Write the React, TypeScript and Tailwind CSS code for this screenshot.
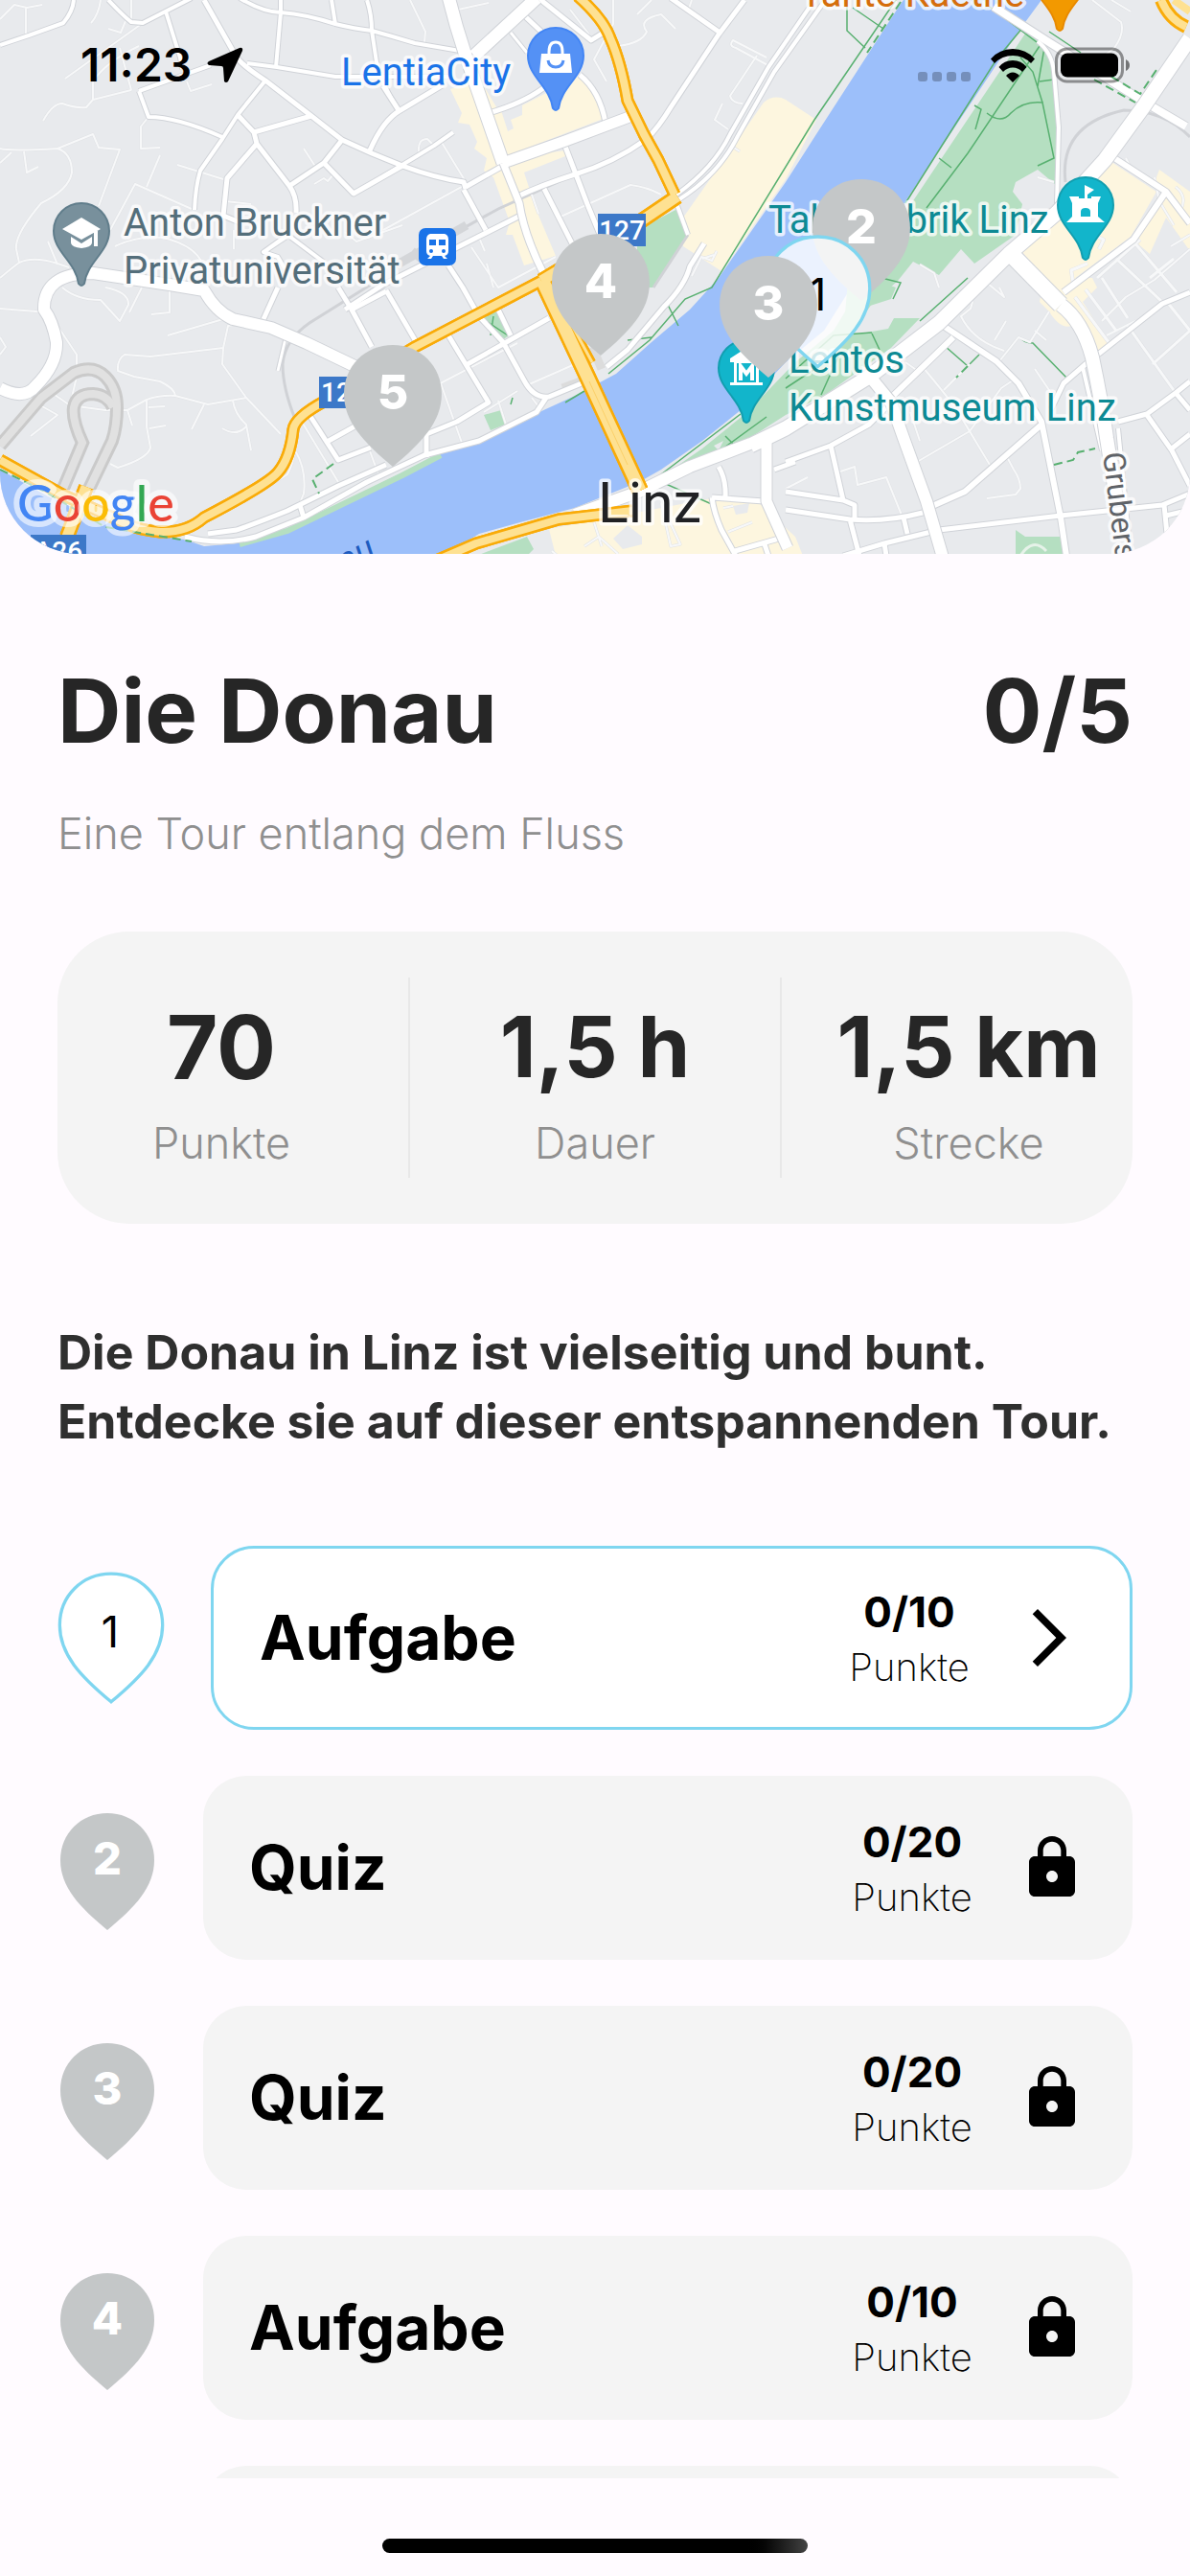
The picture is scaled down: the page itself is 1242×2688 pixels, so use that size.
import { MdLock } from "react-icons/md";

type Road = [number, string];

const LAND = "#e8eaed";
const PARK = "#b5dfc1";
const TRAIL = "#58b070";
const SHOP = "#fdf6df";

const PIN_PATH =
  "M49 0C76.500 0 98 21 98 49C98 77 78 98 49 122C20 98 0 77 0 49C0 21 21.500 0 49 0Z";

const lanes: Road[] = [
  [2, "M0 20L15 5L28 8L44 5M27 8V36M105 0Q103 15 95 24M113 30L126 34L131 22M137 0V20M68 82L149 24"],
  [2, "M45 126Q55 108 65 108Q78 113 90 112L97 104L137 94M97 104V85Q110 65 145 48M125 50L137 94"],
  [2, "M0 155Q10 158 60 155Q75 160 75 180Q72 198 43 212Q15 245 17 260L20 274M25 158L28 180L40 174M0 170L12 159"],
  [2, "M60 155L97 140L103 154L125 156L103 215M155 122L147 132V155L167 154M167 162L153 195"],
  [2, "M115 240L141 192L200 218M185 172L233 187M195 85L199 95L221 88M317 155L330 175M328 192L338 186L342 189L348 182"],
  [2, "M0 290Q12 280 20 274Q35 267 60 275L72 279M50 252L60 276M120 257Q145 245 170 248Q200 255 210 272M244 240V260M420 235L372 252L360 242M235 210L262 213"],
  [2, "M60 340L80 370V393L73 423M47 405L73 423L110 428H133L153 417Q168 412 183 413L217 422L257 415L293 453"],
  [2, "M257 415L232 380L233 363L238 340L250 338M233 363L157 372L130 370Q122 375 123 387L140 393L167 398Q182 405 183 413"],
  [2, "M213 422L200 448M243 418Q245 432 257 443L262 470M232 447Q247 456 257 445M153 417V445L157 467Q155 478 123 488L115 484"],
  [2, "M32 455L60 433L44 424M133 428L138 444M155 425L172 424M156 447L173 444M175 350L233 333M148 300L135 326M177 300V326L158 328"],
  [2, "M0 322L50 326M65 300Q80 313 105 313L125 335L134 318Q135 305 110 300M0 352L6 362L0 370"],
  [2, "M428 0L444 33L443 44M478 10L510 3M400 240L545 160M583 227L658 193Q675 195 690 203M460 147L485 188M437 158Q436 145 446 145L453 152"],
  [2, "M595 10L615 36M640 0V25L620 62L633 85M645 48Q670 45 675 33Q665 20 690 15L705 30M680 0L665 15M800 60L765 42Q760 48 768 50L805 70M790 58L762 100Q764 108 775 108M754 108L746 125L760 135M763 152L772 158M722 0L718 12"],
  [2, "M555 203L562 223M500 248L506 262M492 258L520 300L580 268M508 275L515 300M733 270L745 266M748 262L743 272L732 268L722 288"],
  [2, "M460 400L482 462M520 418L528 443M555 415L565 428M450 405L540 358M550 402L600 380M505 430L540 408"],
  [2, "M315 440L353 503M308 470Q320 490 317 515L313 525L316 535M385 468L395 495M268 515L300 495Q308 480 307 465"],
  [2, "M1140 0L1170 23Q1174 35 1163 50L1150 60M1160 0L1180 12M1083 185L1100 190M960 276L975 285L980 300"],
  [2, "M1000 305L1015 315L1013 322L1003 330Q1015 355 1048 366M1038 355L1050 335M1030 295L1048 310L1043 300M1043 377L1063 352L1075 357L1095 325M1080 345L1092 355"],
  [2, "M1080 385L1097 410M963 383Q990 415 1000 430L1033 485M957 482L1012 450L1045 405L1060 395M985 407L1012 380M945 378L962 390M950 430L960 460"],
  [2, "M1050 475L1058 490Q1065 500 1065 510L1060 516L1030 520M877 492L892 487L895 506L925 498L942 540M820 510L843 498"],
  [3, "M1100 215L1060 250M1177 340L1227 410M1203 380L1242 345M1218 315L1242 345M1122 310L1157 357M1133 302L1165 345M1150 290L1177 332M1165 270L1213 315M1183 252L1228 305M1200 290L1225 270M1145 290L1190 250M1135 275L1118 282L1120 295M1147 260L1152 250L1140 245"],
  [2, "M1150 335L1175 310L1205 292L1242 260M1155 350L1185 335M1155 165L1180 175L1175 165M1205 185L1210 210L1225 235M1222 257L1242 245M1227 195Q1240 205 1232 220"],
  [2, "M690 525L700 570L710 568L690 525M700 500L725 490M610 570L625 560L645 578M620 545L628 570M576 575L582 580M755 530L765 528M760 555L785 545"],
];

const streets: Road[] = [
  [4, "M0 47L30 37L66 24Q76 12 77 0M113 0Q130 18 137 23L149 24L200 -2M173 12L188 60L190 72M145 95L220 68"],
  [5, "M213 0L247 60Q255 70 277 84L325 121L357 146L388 160L420 173Q455 186 484 190L486 197"],
  [4, "M250 -2Q275 13 293 13Q320 15 350 25Q370 30 388 32Q410 38 433 45L480 53M293 0V13L288 70M346 0L350 25M383 0Q388 15 388 32L393 65Q398 88 416 115"],
  [4, "M258 66L289 70L350 80H470M145 95L155 122Q185 122 232 143M277 84L248 120L232 145L209 178Q204 195 203 219"],
  [5, "M248 120L265 138L268 150L237 186L233 225L250 232M265 138Q300 128 325 121M268 150L302 194Q310 205 309 222"],
  [5, "M302 194L338 170L357 146M338 170L369 202L420 173M386 157Q400 125 418 115L463 88M400 90L416 115"],
  [4, "M400 184L453 152L473 138M275 263L300 245L340 275M302 245L275 263L290 268L297 280"],
  [5, "M562 -2L617 42L633 32M549 18L565 33M510 118Q545 108 567 92M605 78Q626 95 632 128"],
  [3, "M533 34L550 55"],
  [5, "M484 198L507 240M486 195L525 173M568 197L600 260M590 153L613 213L627 247M543 225L400 297L360 323M468 277L483 300L497 325"],
  [5, "M777 0L750 36L700 112Q688 132 675 145Q640 170 600 182Q565 193 538 206M700 -2L750 33"],
  [4, "M850 0L802 70L762 140Q745 175 706 203"],
  [4, "M860 2L808 75L770 142Q750 182 709 208"],
  [4, "M707 215L718 245"],
  [5, "M735 254L720 278Q715 298 693 320L655 365L633 383"],
  [5, "M353 300L367 323L388 362M367 323L403 304M275 333L290 300M403 303L435 358"],
  [3, "M298 353L290 387"],
  [5, "M323 433L353 480L387 467M343 460L370 445M445 477V453L477 440L510 420L468 350M500 330L525 357L547 397Q557 416 573 414L607 400M488 380L573 332M520 323L533 350"],
  [5, "M217 557L247 553Q270 545 300 533L353 507L403 485M193 560Q230 570 267 560L317 540L383 503L443 475L500 460L560 430L570 415M313 527L317 540"],
  [4, "M1083 43Q1098 55 1100 75L1105 133L1103 213"],
  [8, "M1037 7L1093 43L1197 108L1238 132"],
  [6, "M1160 163L1217 200L1242 233M1217 200L1183 250L1110 305"],
  [6, "M980 337L1040 377L1063 400L1087 440L1107 540L1113 580M995 352L963 383L932 413M973 528L1007 513L1087 443"],
  [5, "M820 482L867 465L907 443L925 425M867 465L880 522M820 513L880 522L892 527V540M820 532L887 542Q925 545 963 535M887 542L897 580M943 540L947 557"],
  [5, "M880 580L923 567L980 553L1107 538L1213 527L1242 515M923 567L925 580M1097 427L1110 400L1133 380L1213 317L1242 305"],
  [5, "M1167 440L1197 432L1227 410L1242 398M1197 433L1223 470L1242 507M1223 468L1242 453M1227 410L1242 428M1215 527L1218 557M1217 538L1242 532"],
  [4, "M1167 447L1180 580M1130 383L1150 470"],
  [5, "M750 487Q758 500 757 519M743 519L797 523M743 519Q745 535 753 553L768 580M767 575L820 560M797 565L802 580M808 490L830 482"],
];

const avenues: Road[] = [
  [12, "M0 405Q25 418 37 403Q60 380 59 357Q55 335 46 323Q45 285 97 285L177 297L213 303Q225 325 243 333L283 342L320 358L370 382"],
  [13, "M468 -4Q475 25 485 55L525 170M495 58L560 -2"],
  [11, "M525 170L590 147L662 120"],
  [7, "M525 170L542 212Q547 245 567 285"],
  [15, "M1242 40L1193 112L1153 167L1103 222L1053 265L980 337L907 393L820 447L783 465"],
  [12, "M783 463L720 487L667 513L600 537"],
  [17, "M1053 263L1107 318"],
  [14, "M1107 318Q1130 335 1140 373Q1150 420 1155 457L1165 520"],
  [12, "M908 393L930 420L943 457L967 523L985 585"],
  [11, "M800 460V523L822 572"],
];

const highways: Road[] = [
  [13, "M603 -4Q630 20 637 40Q648 65 655 105L672 140L687 167L704 203"],
  [16, "M707 205L667 232L565 293"],
  [13, "M565 293L433 362L340 418Q308 435 306 448Q303 478 290 493Q280 505 213 540Q195 556 167 555Q145 553 133 547L67 517L0 480"],
  [18, "M566 293L613 393L668 512"],
  [8, "M572 293L618 378"],
  [13, "M455 585L497 567L583 542L660 533"],
  [16, "M90 508L70 560"],
];

const trails =
  "M945 212L1040 62L1068 28M967 217L1010 160L1085 48M980 165L993 175M1017 110L1024 114L1018 135M1030 118Q1045 130 1055 118Q1068 105 1088 107L1078 75L1065 60M1085 85L1100 83M1083 90L1090 50L1030 5M1088 107L1100 165L1083 173M884 0V32L903 50M890 8L922 30M1095 33L1128 55M935 0L850 125L743 300L715 312L678 355L635 390M1010 290L960 335M820 395L870 350L910 347M820 405L858 380M857 412L875 372M910 348L918 365M920 290L940 295L932 312M773 432L690 495M800 435L745 475M757 455L765 463M986 361L1010 382L1022 370M1065 352Q1068 358 1078 358L1113 394M697 318L708 340M655 355L680 352M503 332L530 350M515 330L512 350M535 415L533 422M695 505L745 527M590 420L610 408";

const dashedTrails =
  "M940 2L905 55M1142 83L1185 107M1160 80L1190 98L1207 73M1010 382L998 394M1100 485L1120 480L1125 472L1143 468M0 490L45 512L110 550L200 565M348 484L326 500L333 515";

const transit =
  "M387 297L323 337Q297 355 295 380Q295 405 308 437M413 277L520 218L600 182M1112 190Q1105 130 1173 115Q1215 115 1242 143M718 245L682 300";

function Roads({ items, casing, fill, edge }: { items: Road[]; casing: string; fill: string; edge: number }) {
  return (
    <g fill="none" strokeLinejoin="round">
      {items.map(([w, d], i) => (
        <path key={"c" + i} d={d} stroke={casing} strokeWidth={w + edge} />
      ))}
      {items.map(([w, d], i) => (
        <path key={"f" + i} d={d} stroke={fill} strokeWidth={w} />
      ))}
    </g>
  );
}

function Poi({ x, y, fill, edge, children }: { x: number; y: number; fill: string; edge: string; children?: React.ReactNode }) {
  return (
    <g transform={`translate(${x} ${y})`}>
      <path
        d="M-3 85C-6 62 -29 52 -29 30A29 29 0 0 1 29 30C29 52 6 62 3 85Q0 89 -3 85Z"
        fill={fill}
        stroke={edge}
        strokeWidth="2"
      />
      {children}
    </g>
  );
}

function Stop({ x, y, n }: { x: number; y: number; n: number }) {
  return (
    <g transform={`translate(${x} ${y})`}>
      <path d={PIN_PATH} transform="scale(1.04)" fill="#c4c7c8" />
      <text x="51" y="67" textAnchor="middle" fontSize="50" fontWeight="800" fill="#fff" className="font-['Inter',sans-serif]">
        {n}
      </text>
    </g>
  );
}

function CityMap() {
  const halo = { stroke: "#fff", strokeOpacity: 0.75, strokeWidth: 7, strokeLinejoin: "round" as const, paintOrder: "stroke" };
  return (
    <svg
      viewBox="0 0 1242 578"
      preserveAspectRatio="xMidYMid slice"
      className="block h-[578px] w-full font-['Roboto',sans-serif]"
      role="img"
      aria-label="Karte von Linz"
    >
      <rect width="1242" height="578" fill={LAND} />

      <g fill={SHOP}>
        <path d="M545 110L603 80Q622 88 632 123L528 163L510 120L522 112L530 137L536 134L533 125L545 120Z" />
        <path d="M470 93L492 85L530 165L590 157V163L547 180L560 220L580 267L547 277L535 245H528L532 232L515 185L505 178L508 165L495 155L498 148L490 130L478 128L482 118Z" />
        <path d="M505 90L520 115L510 118Z" />
        <path d="M797 107Q808 98 820 104L852 125L820 187L753 283L713 257V227Z" />
        <path d="M1157 167L1207 200L1180 247L1113 297L1107 312L1067 263L1103 225Z" />
        <path d="M1210 177L1242 200V262L1217 227L1200 265L1185 252L1217 200L1205 190Z" />
        <path d="M1090 290H1140L1145 300L1130 315L1157 357L1143 370L1127 335Q1110 350 1095 325L1085 315Z" />
        <path d="M573 552L690 530L743 520L790 523L830 560L838 580H580Z" />
      </g>
      <path d="M640 562L655 548L670 560V568L650 573ZM765 528L782 525L780 535L768 537Z" fill={LAND} />

      <path
        d="M0 490L50 518L100 540L143 557L193 563L213 570L247 567L300 553L400 503L460 473L500 463L563 430L600 413L643 390L680 357L720 323L750 290L820 190L852 140L938 7L943 0H1087L1065 30L943 213L860 345L820 378L773 428L733 460L690 490L667 503L600 530L543 545L500 557L463 580H0Z"
        fill="#9cbffa"
      />
      <path d="M250 568L300 554L420 496L460 475" stroke={PARK} strokeWidth="6" fill="none" />

      <g fill={PARK}>
        <path d="M1072 32L1090 50L1098 73L1103 133L1102 193L1083 177L1060 190L1057 200L1067 213L1060 245L1017 275L1003 260L980 287L953 273L937 293L910 317L887 350L927 343L933 332H960L930 363L857 415L820 433L767 467L687 500L733 468L780 430L830 378L870 345L948 217Z" />
        <path d="M707 218L718 245L683 300L665 300V240Z" />
        <path d="M503 332L517 323L532 350L520 357ZM505 433L523 428L527 443L512 449Z" />
        <path d="M1060 553L1070 560H1107L1110 580H1060ZM497 580L550 560L557 573L550 580Z" />
        <path d="M885 293L915 293L935 300L930 312L905 320L880 350Z" />
      </g>
      <path d="M825 430L875 405L840 425ZM745 465L755 460L750 470Z" fill={LAND} />
      <path d="M1065 580Q1078 560 1092 575" fill="none" stroke="#e6f2e9" strokeWidth="3" />

      <path d={trails} fill="none" stroke={TRAIL} strokeWidth="1.500" />
      <path d={transit} fill="none" stroke="#d0d2d6" strokeWidth="3" />
      <path d="M413 277L487 235M430 262L440 270" fill="none" stroke="#d4d6d9" strokeWidth="9" />

      <Roads items={lanes} casing="#e0e2e5" fill="#f7f8f9" edge={1} />

      <g fill="none">
        <g stroke="#cacaca" strokeWidth="14">
          <path d="M0 465L43 415L77 389Q97 380 110 393Q122 405 122 425Q122 445 117 460L92 512" />
          <path d="M65 512L86 462Q75 438 77 425Q80 411 97 411Q112 412 118 425" />
        </g>
        <g stroke="#e1e1e1" strokeWidth="8">
          <path d="M0 465L43 415L77 389Q97 380 110 393Q122 405 122 425Q122 445 117 460L92 512" />
          <path d="M65 512L86 462Q75 438 77 425Q80 411 97 411Q112 412 118 425" />
        </g>
        <path d="M587 405L606 398M618 362L628 385" stroke="#dcdcdc" strokeWidth="9" />
      </g>

      <Roads items={streets} casing="#d0d3d8" fill="#fff" edge={2} />
      <Roads items={avenues} casing="#d0d3d8" fill="#fff" edge={2} />
      <Roads items={highways} casing="#f9ab08" fill="#f9ab08" edge={0} />
      <g fill="none" stroke="#fee192" strokeLinejoin="round">
        {highways.map(([w, d]) => (
          <path key={d} d={d} strokeWidth={w - 5} />
        ))}
        <path d="M1212 0Q1220 20 1238 28" strokeWidth="14" stroke="#f9ab08" />
        <path d="M1212 0Q1220 20 1238 28M1225 0L1242 12" strokeWidth="8" />
      </g>
      <path d="M615 398L655 485" stroke="#fbd06a" strokeWidth="1" />
      <path d={dashedTrails} fill="none" stroke={TRAIL} strokeWidth="2" strokeDasharray="9 5" />

      <g fontSize="28" fontWeight="500" fill="#fff">
        <rect x="624" y="223" width="50" height="34" fill="#3c78c8" />
        <text x="649" y="250" textAnchor="middle">127</text>
        <rect x="333" y="393" width="50" height="33" fill="#3c78c8" />
        <text x="335" y="419">127</text>
        <rect x="32" y="558" width="58" height="34" fill="#3c78c8" />
        <text x="61" y="585" textAnchor="middle">A26</text>
      </g>

      <g fontSize="40" {...halo}>
        <text x="356" y="89" fill="#1a73e8">LentiaCity</text>
        <text x="129" y="246" fill="#546e7a">Anton Bruckner</text>
        <text x="129" y="296" fill="#546e7a">Privatuniversität</text>
        <text x="802" y="243" fill="#0d8a94">Tabakfabrik Linz</text>
        <text x="823" y="389" fill="#0d8a94">Lentos</text>
        <text x="823" y="439" fill="#0d8a94">Kunstmuseum Linz</text>
        <text x="835" y="7" fill="#d56e0c">Tante Kaethe</text>
        <text x="624" y="545" fontSize="59" fill="#202124">Linz</text>
        <text transform="translate(1151 473) rotate(83)" fontSize="32" fill="#5f6368">Gruberstraße</text>
      </g>
      <text transform="translate(394 580) rotate(-28)" textAnchor="end" fontSize="36" fontStyle="italic" fill="#1d5bbf">
        Donau
      </text>

      <g transform="translate(437 238)">
        <rect width="39" height="39" rx="7" fill="#1a73e8" />
        <path
          d="M12 6H27Q31 7 31 12V24Q31 28 27 29L30 32H26L24 29H15L13 32H9L12 29Q8 28 8 24V12Q8 7 12 6ZM11 12V18H18V12ZM21 12V18H28V12Z"
          fill="#fff"
          fillRule="evenodd"
        />
        <circle cx="13" cy="24" r="2" fill="#1a73e8" />
        <circle cx="26" cy="24" r="2" fill="#1a73e8" />
      </g>

      <Poi x={85} y={211} fill="#78909c" edge="#607d8b">
        <path d="M-20 28L0 16L20 28L0 39ZM-11 36L0 43L11 36V42Q11 47 0 48Q-11 47 -11 42ZM14 30H17V46H13V32Z" fill="#fff" />
      </Poi>
      <Poi x={580} y={28} fill="#5491f5" edge="#4285f4">
        <path d="M-15 28H15L17 48H-17Z" fill="#fff" />
        <path d="M-7 30V26Q-7 16 0 16Q7 16 7 26V30" fill="none" stroke="#fff" strokeWidth="3" />
        <path d="M-8 35Q-7 42 0 42Q7 42 8 35" fill="none" stroke="#5491f5" strokeWidth="3" />
      </Poi>
      <Poi x={1133} y={184} fill="#12b5cb" edge="#129eaf">
        <path
          d="M-1 9L9 14L2 19V23H6V21H16L13 28V42L20 48H-20L-14 42V28L-17 21H-7V23H-1ZM-5 42H5V37Q5 33 0 33Q-5 33 -5 37Z"
          fill="#fff"
          fillRule="evenodd"
        />
      </Poi>
      <Poi x={779} y={354} fill="#12b5cb" edge="#129eaf">
        <path d="M-17 24V20L0 9L17 20V24H13V45H17V48H-17V45H-13V24Z" fill="#fff" />
        <rect x="-10" y="25" width="20" height="20" fill="#12b5cb" />
        <path d="M-6 43V28L0 36L6 28V43" fill="none" stroke="#fff" strokeWidth="4" />
      </Poi>
      <Poi x={1106} y={-55} fill="#f29900" edge="#e88a00" />

      <text
        x="18"
        y="544"
        fontSize="52"
        strokeWidth="12"
        stroke="#fff"
        strokeOpacity="0.6"
        strokeLinejoin="round"
        paintOrder="stroke"
        fontWeight="500"
        className="font-['Lato',sans-serif]"
      >
        <tspan fill="#4285f4">G</tspan>
        <tspan fill="#ea4335">o</tspan>
        <tspan fill="#fbbc05">o</tspan>
        <tspan fill="#4285f4">g</tspan>
        <tspan fill="#34a853">l</tspan>
        <tspan fill="#ea4335">e</tspan>
      </text>

      <Stop x={359} y={360} n={5} />
      <Stop x={576} y={244} n={4} />
      <Stop x={848} y={187} n={2} />
      <g transform="translate(799 247)">
        <path d={PIN_PATH} transform="scale(1.110)" fill="#fff" fillOpacity="0.8" stroke="#7fd6f0" strokeWidth="3" />
        <text x="54" y="77" textAnchor="middle" fontSize="46" className="font-['Inter',sans-serif]">
          1
        </text>
      </g>
      <Stop x={751} y={267} n={3} />
    </svg>
  );
}

function StatusBar() {
  return (
    <div className="absolute inset-x-0 top-0 flex h-[136px] items-center justify-between pr-[62px] pl-[84px]">
      <div className="flex items-center gap-4">
        <time className="text-[48px] leading-none font-semibold">11:23</time>
        <svg viewBox="0 0 38 38" className="size-[38px]" aria-hidden="true">
          <path
            d="M34 1Q38 0 37 4L22 36Q20 38 18 36L17 22Q17 20 15 20L2 19Q-1 17 2 15Z"
            fill="#000"
          />
        </svg>
      </div>
      <div className="flex items-center gap-5">
        <div className="flex gap-[5px] pt-[24px]">
          {[0, 1, 2, 3].map((i) => (
            <span key={i} className="size-[10px] rounded-[3px] bg-black/25" />
          ))}
        </div>
        <svg viewBox="0 0 48 36" className="h-[36px] w-[48px]" aria-label="WLAN">
          <path d="M1 11.500Q10 1 24 1T47 11.500L43 16Q35 8 24 8T5 16Z" />
          <path d="M9.500 20Q15 13 24 13T38.500 20L34 25Q30 20.500 24 20.500T14 25Z" />
          <path d="M17 29Q20 25.500 24 25.500T31 29L24 36Z" />
        </svg>
        <svg viewBox="0 0 79 38" className="h-[38px] w-[79px]" aria-label="Akku voll">
          <rect x="1.500" y="2" width="69" height="34" rx="11" fill="none" stroke="#000" strokeOpacity="0.4" strokeWidth="3" />
          <rect x="6" y="6.500" width="60" height="25" rx="7" />
          <path d="M74 13Q78 15 78 19T74 25Z" fillOpacity="0.5" />
        </svg>
      </div>
    </div>
  );
}

type Stat = { value: string; label: string; cell: string; size: string };

const stats: Stat[] = [
  { value: "70", label: "Punkte", cell: "w-[366px] pr-6", size: "text-[92px]" },
  { value: "1,5 h", label: "Dauer", cell: "flex-1 border-x-2 border-[#e8e8e8]", size: "text-[88px]" },
  { value: "1,5 km", label: "Strecke", cell: "w-[366px] pl-6", size: "text-[88px]" },
];

type Task = { kind: string; points: number; open?: boolean };

const tasks: Task[] = [
  { kind: "Aufgabe", points: 10, open: true },
  { kind: "Quiz", points: 20 },
  { kind: "Quiz", points: 20 },
  { kind: "Aufgabe", points: 10 },
  { kind: "Quiz", points: 20 },
];

function OpenPin({ n }: { n: number }) {
  return (
    <svg viewBox="-2 -2 102 126" className="h-[138px] w-[112px] shrink-0" aria-hidden="true">
      <path d={PIN_PATH} fill="#fff" stroke="#7fd6f0" strokeWidth="3" />
      <text x="48" y="70" textAnchor="middle" fontSize="41">
        {n}
      </text>
    </svg>
  );
}

function LockedPin({ n }: { n: number }) {
  return (
    <svg viewBox="0 0 98 122" className="mt-2 ml-[3px] h-[122px] w-[98px] shrink-0" aria-hidden="true">
      <path d={PIN_PATH} fill="#c4c7c8" />
      <text x="49" y="64" textAnchor="middle" fontSize="47" fontWeight="800" fill="#fff">
        {n}
      </text>
    </svg>
  );
}

function TaskRow({ task, n }: { task: Task; n: number }) {
  return (
    <li className="flex shrink-0 items-center">
      {task.open ? <OpenPin n={n} /> : <LockedPin n={n} />}
      <button
        type="button"
        disabled={!task.open}
        className={
          task.open
            ? "ml-12 flex h-[192px] flex-1 items-center rounded-[45px] border-3 border-[#7fd6f0] bg-white pr-12 pl-12 text-left"
            : "ml-[51px] flex h-[192px] flex-1 items-center rounded-[45px] bg-[#f4f4f4] pr-12 pl-12 text-left"
        }
      >
        <span className="flex-1 text-[64px] leading-[80px] font-bold">{task.kind}</span>
        <span className="flex w-[124px] flex-col items-center pt-1">
          <span className="text-[44px] leading-[58px] font-bold">0/{task.points}</span>
          <span className="text-[40px] leading-[58px] font-extralight">Punkte</span>
        </span>
        {task.open ? (
          <svg viewBox="0 0 24 24" className="ml-12 size-[72px]" aria-hidden="true">
            <path d="M6.230 20.230 8 22l10-10L8 2 6.230 3.770 14.460 12z" />
          </svg>
        ) : (
          <MdLock className="ml-12 size-[72px]" aria-hidden="true" />
        )}
      </button>
    </li>
  );
}

export default function App() {
  return (
    <div className="flex h-screen flex-col bg-[#fffbff] font-['Inter',sans-serif] text-black">
      <main className="flex min-h-0 flex-1 flex-col overflow-hidden">
        <header className="relative shrink-0 overflow-hidden rounded-b-[84px]">
          <CityMap />
          <StatusBar />
        </header>

        <div className="flex min-h-0 flex-col px-[60px] pt-[108px]">
          <div className="flex shrink-0 items-center justify-between text-[92px] leading-[112px] font-bold text-[#262626]">
            <h1>Die Donau</h1>
            <p>0/5</p>
          </div>
          <p className="mt-10 shrink-0 text-[45px] leading-[64px] font-light text-[#8f8f8f]">
            Eine Tour entlang dem Fluss
          </p>

          <dl className="mt-[70px] flex shrink-0 rounded-[75px] bg-[#f4f4f4] py-12">
            {stats.map((s) => (
              <div key={s.label} className={`flex flex-col-reverse items-center justify-center ${s.cell}`}>
                <dt className="-mt-1 pb-1 text-[45px] leading-[64px] font-light text-[#8f8f8f]">
                  {s.label}
                </dt>
                <dd className={`leading-[145px] font-bold whitespace-nowrap text-[#262626] ${s.size}`}>{s.value}</dd>
              </div>
            ))}
          </dl>

          <p className="mt-[98px] shrink-0 text-[50px] leading-[72px] font-bold text-[#2f2f2f]">
            Die Donau in Linz ist vielseitig und bunt.
            <br />
            Entdecke sie auf dieser entspannenden Tour.
          </p>

          <ul className="mt-[94px] flex flex-col gap-12">
            {tasks.map((t, i) => (
              <TaskRow key={i} task={t} n={i + 1} />
            ))}
          </ul>
        </div>
      </main>

      <footer className="flex h-[102px] shrink-0 justify-center pt-[63px]">
        <div className="h-[15px] w-[444px] rounded-full bg-linear-to-r from-black from-85% to-[#444]" />
      </footer>
    </div>
  );
}
